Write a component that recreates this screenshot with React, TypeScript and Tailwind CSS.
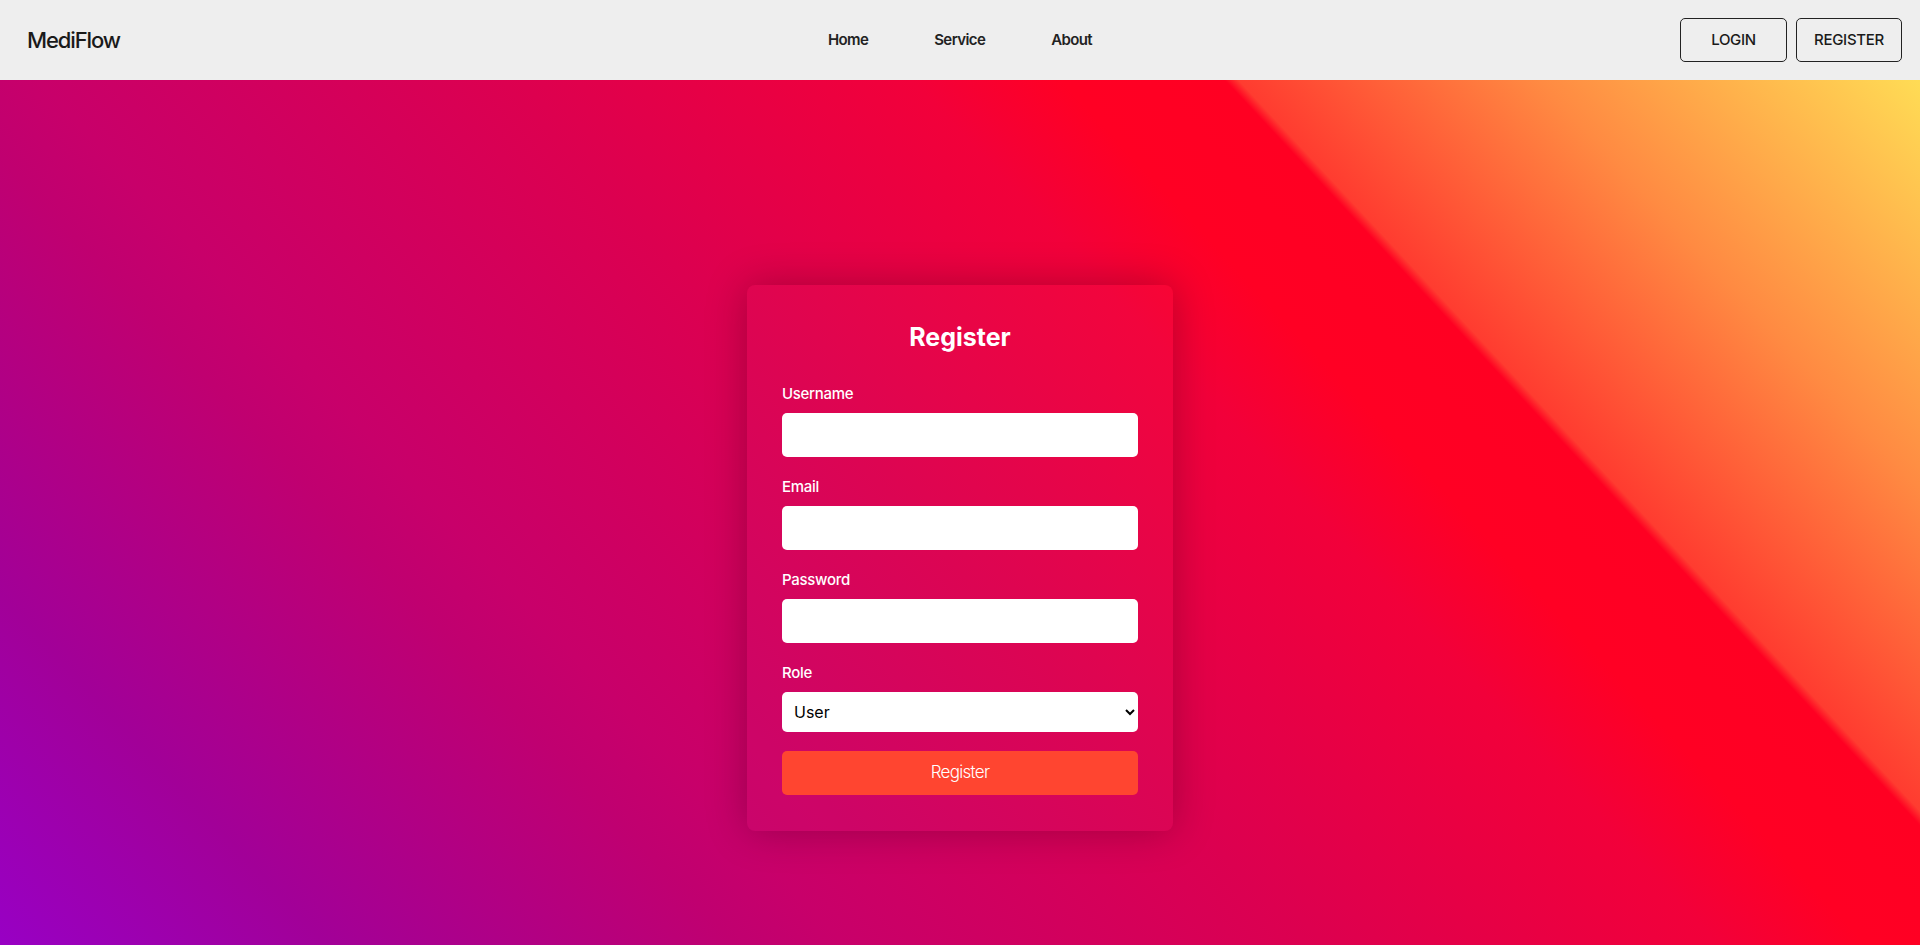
import React from "react";

const navLinks = ["Home", "Service", "About"];

function Field({ label, type }: { label: string; type: string }) {
  return (
    <div className="mb-[19px]">
      <label className="block mb-[9px] pt-px text-[15px] leading-5 font-medium tracking-[-0.3px] text-white">{label}</label>
      <input type={type} className="block w-full h-11 rounded-[5px] bg-white px-3 text-base text-black outline-none" />
    </div>
  );
}

export default function App() {
  return (
    <div className="min-h-screen font-['Inter','Liberation_Sans',sans-serif]">
      <header className="h-20 bg-[#eeeeee] grid grid-cols-[1fr_auto_1fr] items-center px-[18px]">
        <div className="pl-[9px] text-[22px] font-medium text-[#1a1a1a] tracking-[-1.1px]">MediFlow</div>
        <nav className="flex gap-[66px] text-[15px] font-semibold tracking-[-0.6px] text-[#222]">
          {navLinks.map((l) => (
            <a key={l} href="#" className="leading-5">
              {l}
            </a>
          ))}
        </nav>
        <div className="flex justify-end gap-[9px]">
          <button className="w-[107px] h-11 rounded-[5px] border border-[#222] text-[15px] font-medium tracking-[-0.3px] text-[#1a1a1a]">
            LOGIN
          </button>
          <button className="w-[106px] h-11 rounded-[5px] border border-[#222] text-[15px] font-medium tracking-[-0.3px] text-[#1a1a1a]">
            REGISTER
          </button>
        </div>
      </header>

      <main className="h-[865px] flex justify-center pt-[205px] bg-[linear-gradient(47deg,#9800c4_0%,#a20098_12%,#c00070_27%,#c8006a_31%,#dc0050_48%,#f2003a_63%,#ff0024_68.5%,#ff0022_74.5%,#ff3c30_75%,#ff8a42_86%,#ffdc55_100%)]">
        <div className="w-[426px] h-fit rounded-lg bg-white/[0.02] shadow-[0_0_40px_rgba(0,0,0,0.25)] px-[35px] pt-9 pb-9">
          <h1 className="text-center text-[25px] leading-8 font-bold text-white mb-[30px]">Register</h1>
          <Field label="Username" type="text" />
          <Field label="Email" type="email" />
          <Field label="Password" type="password" />
          <div className="mb-[19px]">
            <label className="block mb-[9px] pt-px text-[15px] leading-5 font-medium tracking-[-0.3px] text-white">Role</label>
            <select className="block w-full h-10 rounded-[5px] bg-white pl-2 pr-1 text-base text-black outline-none">
              <option>User</option>
              <option>Doctor</option>
              <option>Admin</option>
            </select>
          </div>
          <button className="block w-full h-11 rounded-[5px] bg-[#ff4530] text-[17px] font-light tracking-[-0.7px] text-white">
            Register
          </button>
        </div>
      </main>
    </div>
  );
}
